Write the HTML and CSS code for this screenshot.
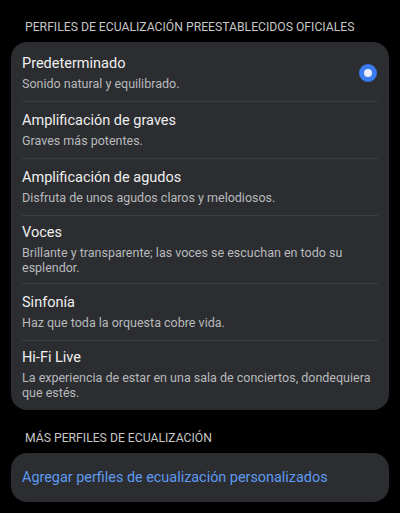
FILE: index.html
```html
<!DOCTYPE html>
<html lang="es">
<head>
<meta charset="utf-8">
<link rel="stylesheet" href="styles.css">
</head>
<body>
<div class="screen">
  <div class="section-head">Perfiles de ecualización preestablecidos oficiales</div>
  <div class="card list">
    <div class="item">
      <div class="text">
        <div class="title">Predeterminado</div>
        <div class="sub">Sonido natural y equilibrado.</div>
      </div>
      <span class="radio"></span>
    </div>
    <div class="item">
      <div class="text">
        <div class="title">Amplificación de graves</div>
        <div class="sub">Graves más potentes.</div>
      </div>
    </div>
    <div class="item">
      <div class="text">
        <div class="title">Amplificación de agudos</div>
        <div class="sub">Disfruta de unos agudos claros y melodiosos.</div>
      </div>
    </div>
    <div class="item">
      <div class="text">
        <div class="title">Voces</div>
        <div class="sub">Brillante y transparente; las voces se escuchan en todo su esplendor.</div>
      </div>
    </div>
    <div class="item">
      <div class="text">
        <div class="title">Sinfonía</div>
        <div class="sub">Haz que toda la orquesta cobre vida.</div>
      </div>
    </div>
    <div class="item last">
      <div class="text">
        <div class="title">Hi-Fi Live</div>
        <div class="sub">La experiencia de estar en una sala de conciertos, dondequiera que estés.</div>
      </div>
    </div>
  </div>
  <div class="section-head second">Más perfiles de ecualización</div>
  <div class="card link-card">
    <div class="link">Agregar perfiles de ecualización personalizados</div>
  </div>
</div>
</body>
</html>
```
FILE: styles.css
```css
html, body {
  margin: 0;
  padding: 0;
  background: #000;
}
body {
  font-family: Roboto, "Noto Sans", sans-serif;
  width: 400px;
  height: 513px;
  overflow: hidden;
}
.screen {
  padding: 0 11px;
}
.section-head {
  text-transform: uppercase;
  color: #c6c6c6;
  font-size: 12.2px;
  line-height: 16px;
  white-space: nowrap;
  padding: 19px 0 7px 14px;
}
.section-head.second {
  padding-top: 20px;
  padding-bottom: 7px;
}
.card {
  background: #2b2d30;
  border-radius: 16px;
  padding: 0 11px;
}
.list {
  padding-top: 3px;
  padding-bottom: 2px;
}
.item {
  box-sizing: border-box;
  min-height: 57px;
  display: flex;
  align-items: center;
  padding: 7px 0 8px;
  border-bottom: 1px solid #3b3d41;
}
.item.last {
  border-bottom: none;
}
.text {
  flex: 1;
  min-width: 0;
}
.title {
  color: #efefef;
  font-size: 14.5px;
  line-height: 20px;
}
.sub {
  color: #b8babd;
  font-size: 12.5px;
  line-height: 15px;
  margin-top: 2px;
}
.radio {
  width: 18px;
  height: 18px;
  border-radius: 50%;
  background: #3b7cf0;
  display: flex;
  align-items: center;
  justify-content: center;
  margin-left: 10px;
  margin-right: 1px;
}
.radio::after {
  content: "";
  width: 8px;
  height: 8px;
  border-radius: 50%;
  background: #e8ecf4;
}
.link-card {
  padding: 15px 11px 14px;
}
.link {
  color: #5e9af0;
  font-size: 14.4px;
  line-height: 20px;
}
```
